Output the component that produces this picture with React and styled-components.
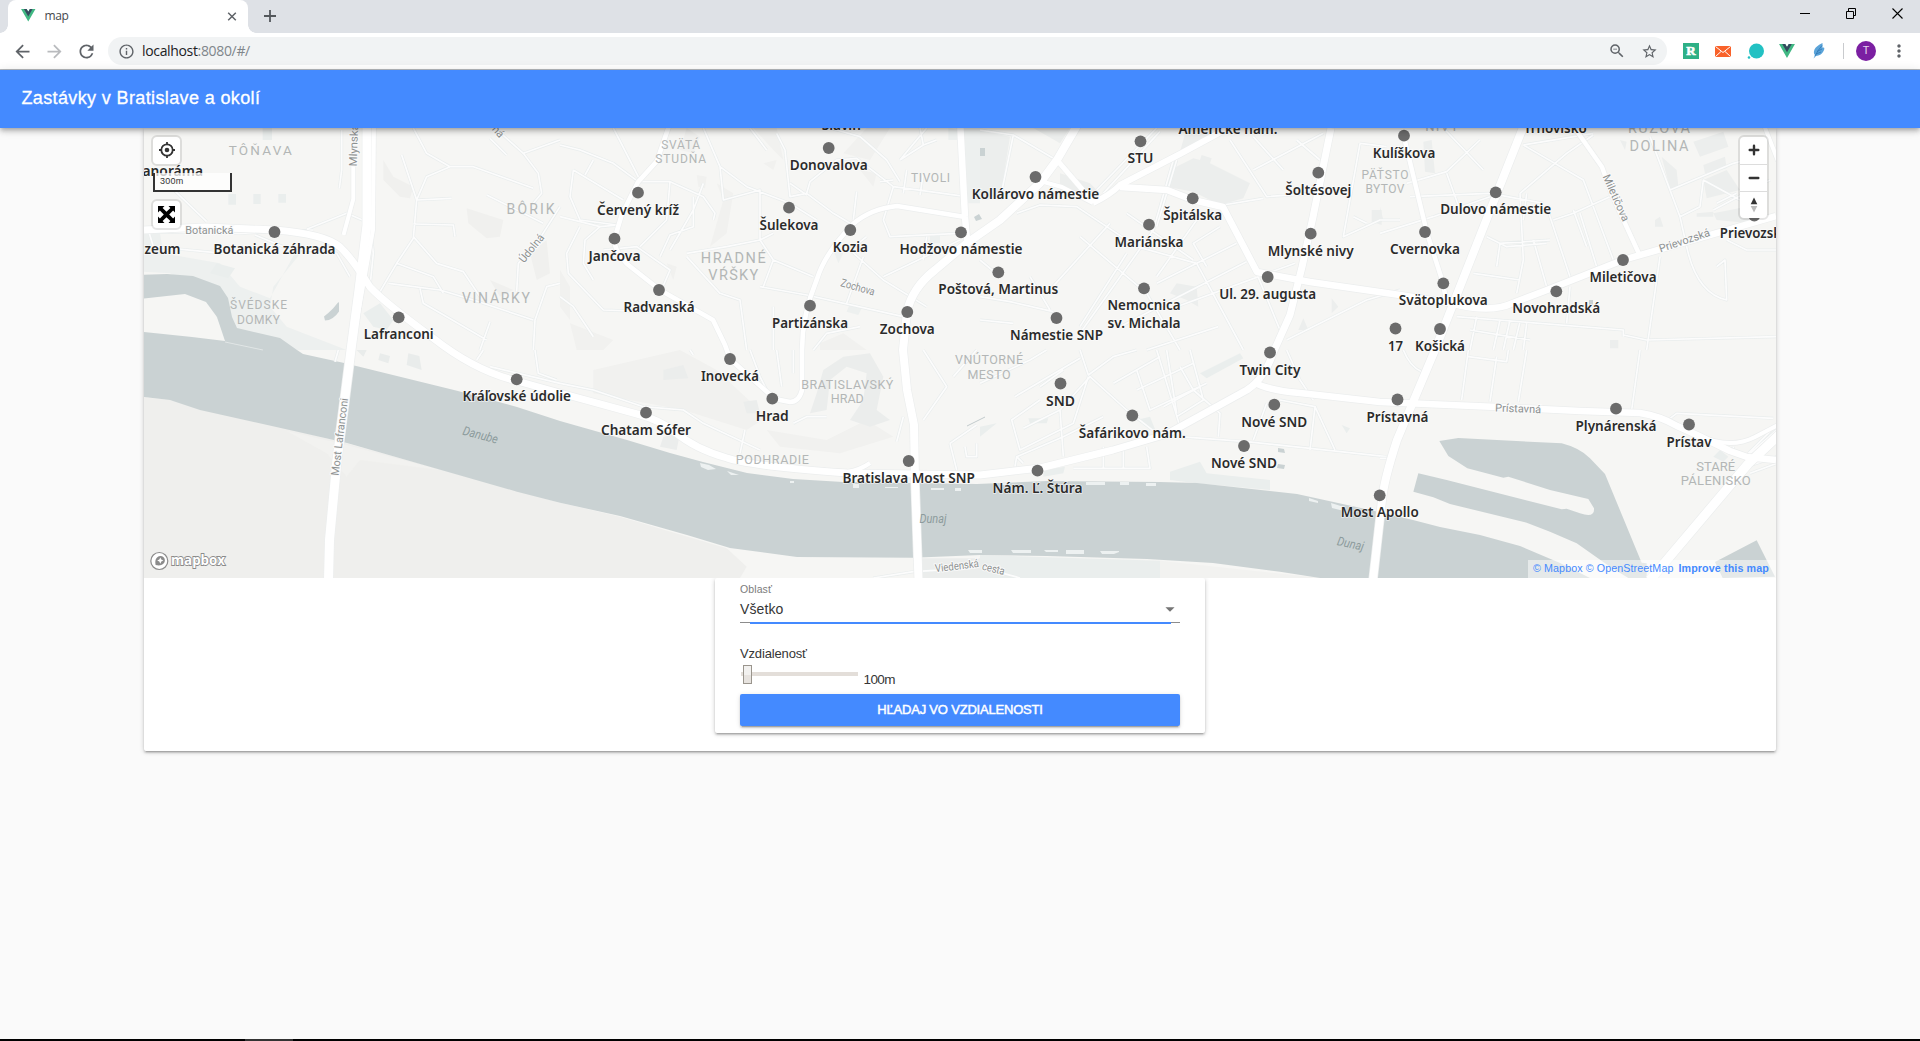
import React from 'react';
import styled, { createGlobalStyle } from 'styled-components';
import { MdArrowBack, MdArrowForward, MdRefresh, MdInfoOutline, MdStarBorder, MdZoomOut, MdMoreVert, MdArrowDropDown } from 'react-icons/md';

const GlobalStyle = createGlobalStyle`
  * { box-sizing: border-box; }
  body { margin: 0; background: #fafafa; font-family: "Liberation Sans", Arial, sans-serif; }
`;

const Screen = styled.div`
  width: 1920px;
  height: 1041px;
  display: flex;
  flex-direction: column;
  overflow: hidden;
  background: #fafafa;
`;

/* ---------- browser chrome ---------- */

const TabStrip = styled.div`
  height: 33px;
  flex: none;
  display: flex;
  background: #dee1e6;
  padding-left: 8px;
  font-family: "Open Sans", "Noto Sans", sans-serif;
`;

const Tab = styled.div`
  position: relative;
  width: 240px;
  height: 33px;
  display: flex;
  align-items: center;
  padding: 0 8px 2px 13px;
  background: #fff;
  border-radius: 8px 8px 0 0;
  &::before, &::after {
    content: "";
    position: absolute;
    bottom: 0;
    width: 8px;
    height: 8px;
  }
  &::before { left: -8px; background: radial-gradient(circle at 0 0, #dee1e6 7.5px, #fff 8px); }
  &::after { right: -8px; background: radial-gradient(circle at 100% 0, #dee1e6 7.5px, #fff 8px); }
`;

const TabTitle = styled.span`
  flex: 1;
  margin-left: 9px;
  font-size: 12px;
  line-height: 16px;
  letter-spacing: -0.4px;
  color: #45494d;
`;

const NewTab = styled.div`
  width: 28px;
  height: 32px;
  margin-left: 8px;
  display: grid;
  place-items: center;
`;

const WindowButtons = styled.div`
  margin-left: auto;
  height: 26px;
  display: flex;
`;

const WindowButton = styled.div`
  width: 46px;
  display: grid;
  place-items: center;
`;

const Toolbar = styled.div`
  height: 37px;
  flex: none;
  display: flex;
  align-items: center;
  padding: 0 3px 0 6px;
  background: #fff;
  border-bottom: 1px solid #b5b8bc;
  font-family: "Open Sans", "Noto Sans", sans-serif;
`;

const Slot = styled.div`
  width: 32px;
  height: 32px;
  flex: none;
  display: grid;
  place-items: center;
  color: ${p => p.$color || '#5f6368'};
`;

const AddressBar = styled.div`
  width: 1559px;
  flex: none;
  height: 28px;
  margin: 0 8px 0 6px;
  display: flex;
  align-items: center;
  padding: 0 2px;
  border-radius: 14px;
  background: #f1f3f4;
`;

const Address = styled.span`
  flex: 1;
  font-size: 14px;
  letter-spacing: -0.34px;
  line-height: 20px;
  color: #202124;
  span { color: #80868b; }
`;

const Separator = styled.div`
  width: 1px;
  height: 16px;
  margin: 0 10px 0 8px;
  background: #c9cbce;
`;

const Avatar = styled.div`
  width: 20px;
  height: 20px;
  flex: none;
  margin: 0 7px 0 2px;
  border-radius: 50%;
  background: #7b1fa2;
  color: #e6d3ee;
  font: 11px/20px Roboto, sans-serif;
  text-align: center;
`;

/* ---------- application ---------- */

const AppBar = styled.header`
  position: relative;
  z-index: 2;
  height: 58px;
  flex: none;
  display: flex;
  align-items: center;
  padding: 0 0 2px 21.5px;
  background: #448aff;
  color: #fff;
  box-shadow: 0 2px 4px -1px rgba(0,0,0,.2), 0 4px 5px rgba(0,0,0,.14), 0 1px 10px rgba(0,0,0,.12);
`;

const Title = styled.h1`
  margin: 0;
  font-size: 18px;
  font-weight: 400;
  letter-spacing: 0.37px;
  line-height: 24px;
  -webkit-text-stroke: 0.3px #fff;
`;

const Content = styled.main`
  flex: 1;
  display: flex;
  flex-direction: column;
  align-items: center;
`;

const elevation = '0 1px 5px rgba(0,0,0,.2), 0 2px 2px rgba(0,0,0,.14), 0 3px 1px -2px rgba(0,0,0,.12)';

const MapCard = styled.section`
  width: 1632px;
  height: 623px;
  display: flex;
  flex-direction: column;
  align-items: center;
  background: #fff;
  border-radius: 2px;
  box-shadow: ${elevation};
`;

const MapView = styled.div`
  position: relative;
  width: 1632px;
  height: 450px;
  overflow: hidden;
  background: #f6f6f4;
  > svg { display: block; }
`;

const ControlGroup = styled.div`
  position: absolute;
  top: ${p => p.$top}px;
  ${p => p.$right ? 'right: 9px;' : 'left: 9px;'}
  width: 27px;
  border-radius: 4px;
  overflow: hidden;
  background: #fff;
  outline: 2px solid rgba(0,0,0,.1);
`;

const ControlButton = styled.div`
  height: 27px;
  display: grid;
  place-items: center;
  & + & { border-top: 1px solid #ddd; }
`;

const ScaleBar = styled.div`
  position: absolute;
  left: 9px;
  top: 45px;
  width: 79px;
  height: 19px;
  padding: 2px 5px;
  border: 2px solid #333;
  border-top: 0;
  background: rgba(255,255,255,.75);
  font-size: 9px;
  line-height: 12px;
  letter-spacing: .25px;
  color: #333;
`;

const Attribution = styled.div`
  position: absolute;
  right: 0;
  bottom: 0;
  width: 248px;
  height: 18px;
  display: flex;
  gap: 3px;
  padding-left: 5px;
  background: rgba(255,255,255,.5);
  color: #448aff;
  font-size: 10.7px;
  line-height: 17px;
  letter-spacing: .1px;
  white-space: nowrap;
  b { margin-left: 2px; letter-spacing: .12px; }
`;

const SearchCard = styled.form`
  width: 490px;
  height: 155px;
  display: flex;
  flex-direction: column;
  padding: 4px 25px 0;
  background: #fff;
  border-radius: 2px;
  box-shadow: ${elevation};
  color: #363636;
  clip-path: inset(0 -10px -10px -10px);
`;

const FieldLabel = styled.label`
  font-size: 10.5px;
  line-height: 15px;
  letter-spacing: .1px;
  color: #7b7b7b;
`;

const Select = styled.div`
  height: 26px;
  display: flex;
  align-items: center;
  justify-content: space-between;
  padding-bottom: 1px;
  font-size: 14px;
  letter-spacing: .1px;
  border-bottom: 1px solid #8c8c8c;
  svg { margin-right: -1px; color: #757575; }
`;

const FocusLine = styled.div`
  height: 2px;
  margin: -1px 9px 0 10px;
  background: #448aff;
`;

const RangeLabel = styled.div`
  margin-top: 21px;
  font-size: 13px;
  line-height: 18px;
  letter-spacing: -0.15px;
`;

const RangeRow = styled.div`
  height: 31px;
  display: flex;
  padding-left: 1px;
`;

const Track = styled.div`
  width: 117px;
  height: 4px;
  margin-top: 9px;
  background: #e3ded9;
`;

const Thumb = styled.div`
  width: 9px;
  height: 19px;
  margin: -7px 0 0 2px;
  border: 1px solid #9a958d;
  background: linear-gradient(#f2f1ef 50%, #e7e3df 50%);
`;

const RangeValue = styled.span`
  margin: 8px 0 0 5.5px;
  font-size: 13.5px;
  line-height: 18px;
  letter-spacing: -0.6px;
`;

const SearchButton = styled.div`
  height: 32px;
  border-radius: 2px;
  background: #448aff;
  box-shadow: 0 3px 1px -2px rgba(0,0,0,.2), 0 2px 2px rgba(0,0,0,.14), 0 1px 5px rgba(0,0,0,.12);
  color: #fff;
  font-size: 13px;
  line-height: 31px;
  letter-spacing: -0.2px;
  text-align: center;
  -webkit-text-stroke: 0.45px #fff;
`;

const TaskbarEdge = styled.div`
  height: 2px;
  flex: none;
  padding-left: 245px;
  background: #000;
  &::before { content: ""; display: block; width: 48px; height: 2px; background: #333; }
`;

/* ---------- map data ---------- */

const stops = [
  ['Botanická záhrada', 274.5, 232, 122], ['Lafranconi', 398.7, 317.3, 70], ['Donovalova', 828.7, 148, 78],
  ['Červený kríž', 638, 192.7, 82], ['Jančova', 614.5, 238.7, 52], ['Radvanská', 659, 290, 71],
  ['Šulekova', 789, 207.7, 59], ['Kozia', 850.3, 230, 35], ['Hodžovo námestie', 961, 232.3, 123],
  ['Partizánska', 810, 305.7, 76], ['Zochova', 907.3, 312, 55], ['STU', 1140.5, 141.3, 26],
  ['Kollárovo námestie', 1035.5, 177, 127.5], ['Špitálska', 1192.7, 198.3, 59], ['Mariánska', 1149, 224.7, 69],
  ['Poštová, Martinus', 998.3, 272.3, 120], ['Námestie SNP', 1056.5, 318, 93], ['Nemocnica|sv. Michala', 1144, 288.3, 73],
  ['Ul. 29. augusta', 1267.7, 277, 97], ['Šoltésovej', 1318.3, 172.7, 66], ['Mlynské nivy', 1310.7, 233.7, 86],
  ['Twin City', 1270, 352.5, 61], ['Kulíškova', 1404, 135.7, 62.5], ['Dulovo námestie', 1495.7, 192.3, 111],
  ['Cvernovka', 1425, 232, 70], ['Svätoplukova', 1443.3, 283.3, 89], ['Novohradská', 1556.3, 291.3, 88],
  ['Miletičova', 1623, 260, 67], ['Prievozská', 1754.3, 215.5, 69], ['17', 1395.5, 328.5, 15],
  ['Košická', 1440, 329, 50], ['Kráľovské údolie', 516.7, 379.3, 108.5], ['Inovecká', 730, 359, 58],
  ['Hrad', 772.3, 398.7, 33], ['Chatam Sófer', 646, 412.7, 90], ['Bratislava Most SNP', 908.7, 461, 132.5],
  ['SND', 1060.5, 383.5, 29], ['Šafárikovo nám.', 1132.3, 415.5, 107], ['Nové SND', 1274.3, 404.7, 66],
  ['Nové SND', 1244, 446, 66], ['Nám. Ľ. Štúra', 1037.5, 470.7, 90], ['Most Apollo', 1379.7, 495.3, 78],
  ['Prístavná', 1397.5, 399.5, 62], ['Plynárenská', 1616, 408.7, 81], ['Prístav', 1689, 424.5, 45],
];

const edgeStops = [
  ['Slavín', 841.3, 130, 39], ['Americké nám.', 1228, 134.3, 99], ['Trhovisko', 1555.3, 133, 63],
  ['Panoráma', 168.5, 176.4, 69], ['Múzeum', 152, 253.8, 57],
];

const districts = [
  ['TÔŇAVA', 260.3, 155.3, 63, 13.5], ['ŠVÉDSKE', 258.5, 309.3, 57, 12], ['DOMKY', 258.5, 323.5, 43, 12],
  ['BÔRIK', 530.6, 214.3, 48, 14], ['VINÁRKY', 496, 303.4, 68, 14], ['SVÄTÁ', 680.7, 149, 39, 12],
  ['STUDŇA', 680.7, 163, 51, 12], ['HRADNÉ', 733.3, 263.3, 65, 14.5], ['VŔŠKY', 733.3, 280.3, 50, 14.5],
  ['TIVOLI', 930.5, 182, 39, 12], ['PÄŤSTO', 1385, 179.3, 47, 12], ['BYTOV', 1385, 193.3, 39, 12],
  ['NIVY', 1441.7, 131, 33, 13], ['RUŽOVA', 1659, 133.3, 62, 14.5], ['DOLINA', 1659, 151, 59, 14.5],
  ['VNÚTORNÉ', 989, 363.7, 68, 12.5], ['MESTO', 989, 378.5, 43, 12.5], ['BRATISLAVSKÝ', 847.3, 388.7, 92, 12.5],
  ['HRAD', 847.3, 403.3, 33, 12.5], ['PODHRADIE', 772.3, 463.8, 73, 12.5], ['STARÉ', 1715.7, 471, 39, 13],
  ['PÁLENISKO', 1715.7, 485.3, 70, 13],
];

/* name, x, y, width, angle */
const streets = [
  ['Botanická', 185.3, 234.3, 48, 0], ['Mlynská dolina', 356.7, 166.5, 76, -88], ['Údolná', 524, 263.5, 33, -51],
  ['ná', 491.5, 129.5, 12, 48], ['Zochova', 840, 286, 35, 16], ['Miletičova', 1602.5, 176.5, 50, 66],
  ['Prievozská', 1660.5, 252.5, 53, -18.5], ['Prístavná', 1495, 411.5, 46, 2], ['Most Lafranconi', 338.5, 476, 78, -83],
  ['Viedenská', 935.5, 572.3, 44, -7], ['cesta', 981.5, 569.5, 23, 14],
];

const waterNames = [['Danube', 462, 434.5, 36, 15], ['Dunaj', 919.5, 522.5, 27, 0], ['Dunaj', 1336.5, 545, 27, 12]];

const mainRoads = [
  ['M144 230L205 227L275 230Q325 234 340 247Q352 258 370 287Q385 303 433 338Q475 371 517 381L560 393L637 414Q660 420 675 432Q695 449 727 458Q750 466 847 473L980 475L1040 468L1113 450L1167 434L1247 390Q1265 378 1273 353L1290 315L1302 267L1313 217L1331 128', 7],
  ['M367 120L367 225L359 290L351 350L337 460L329.5 540L328.5 580', 9],
  ['M374 120L373 230L357 320', 4], ['M353.3 165L353.3 199L343.5 235', 4],
  ['M1253 382Q1270 391 1300 393L1380 402L1497 407L1580 411L1640 413Q1660 416 1677 426L1697 435L1730 451L1747 457L1776 460', 6.5],
  ['M1697 435Q1730 450 1755 437L1780 424', 4],
  ['M1526 120L1497 193L1435 350L1397 440Q1384 480 1382 500L1373 580', 8],
  ['M1078 124L1057 160L1040 183L1000 220L967 243L935 270Q912 288 907 312L903 350L907 390L914 425L915 480L918.5 580', 8],
  ['M1057 160L1093 202', 5], ['M1040 181L1062 187L1093 203', 4], ['M1093 203Q1110 195 1120 185L1180 154L1228 128', 6],
  ['M1120 187L1167 190L1193 200L1223 207L1257 272L1310 282L1400 295L1450 303Q1490 314 1513 303L1547 290L1623 260L1776 216', 6.5],
  ['M960 120L965 217L967 240', 6.5],
  ['M965 217L897 206Q870 209 853 224Q825 253 817 279Q802 315 802 350L802 390Q799 402 790 402L775 399L730 359L725 345L713 320L660 290L627 264Q612 248 615 237L622 214L638 182L657 161L671 120', 4.6],
  ['M1404 137L1427 233L1443 283L1446 300', 4.5], ['M1576 130L1602 167L1612 195L1640 256', 4.5],
  ['M1650 580L1748 464L1780 434', 9], ['M1762 120L1778 161', 4], ['M767 467L847 472Q860 470 870 463', 4],
];

/* minor streets, one origin per block of the plan, in thirds of a pixel */
const blocks = [
  [140, 120, 'M605 30V150L598 205M60 170L200 305M25 330L40 380L250 400M345 345L430 380L500 390L590 400L630 470M500 328L620 280L690 310L700 400L690 500M695 230L700 330M820 24L860 100L930 140L1000 140L1180 205M1050 55L1100 105M1065 24L1150 100L1260 60M1150 100L1195 160L1205 220L1180 250M1040 225L1210 310M930 140L860 170L830 240L785 105M830 240L935 235M830 240L820 355L770 430L720 515M820 312L940 315L945 350M820 350L890 430L970 455L1020 530M770 430L880 470L910 520M745 490L900 510L1000 540L1180 600M840 505L850 550L920 590L1040 660M1050 605L1020 690M1260 260L1190 370L1135 430L1130 515M1180 690L1185 600L1220 500L1260 490M12 335L300 340L520 330'],
  [560, 120, 'M0 75L60 90L160 130L235 185L330 185L430 230L465 280L460 300M100 120L75 165M40 150L190 240M40 150L30 230L60 300L170 315M0 290L120 320L175 315M60 320L20 400L25 460L130 570L270 575M120 320L75 360L70 430L100 480M130 390L230 380L330 450L300 520M330 185L320 300L240 380M400 230L400 320L330 345L300 410M160 24L240 180M430 24L480 140L560 200L690 250L770 300M430 190L400 270L330 390M480 140L490 240L600 210L600 360L640 420L610 500M380 400L500 380L600 360L640 340M380 410L480 520L540 540L560 690M600 500L740 525L1030 590M640 420L760 470M570 24L620 90M650 40L675 90L690 230L740 220L750 185L830 120L890 115L1000 200L1220 230M810 24L900 50L980 120L1020 185M740 220L820 280L870 310M690 190L740 225M1020 120L1090 75L1080 24M1100 24L1020 120M1130 60L1090 75M1040 150L1030 220M1090 160L1080 225M1000 200L970 300L990 350L1200 340M920 350L870 390L970 480L1100 560M910 410L860 550M970 470L1200 360M1100 350L1090 420M880 300L890 215M1000 180L960 185M0 530L40 560L100 650M640 560L640 690M760 690L800 640L900 620'],
  [980, 120, 'M0 30L100 45L220 115M100 45L60 240M110 280L180 255L290 260L470 380L650 430L790 690M350 210L530 24M370 220L540 34M580 120L520 330L300 640M590 120L530 320M300 350L500 520L600 690M390 310L200 520M440 280L640 420M440 400L300 620M650 300L530 470M720 320L640 370L680 440M770 370L530 490M800 425L420 620M830 460L900 630M945 430L590 560M750 60L860 230L1000 220M820 50L910 150M820 150L1030 40M950 60L1020 120M730 255L850 235M500 690L715 620M0 420L60 470M150 470L210 570M0 530L90 545L220 575M1140 70L1090 350L1200 300L1260 300M1140 70L1220 80M1120 290L1160 310M920 660L1160 540L1260 510M0 600L100 610'],
  [1380, 120, 'M80 190L200 155L300 60M190 24L310 150M200 160L240 270M90 230L330 220L490 250M430 75L610 180L700 420M430 75L640 40M420 220L560 100L640 45M420 220L430 420L410 520M440 220L430 300M500 260L570 470M460 360L500 500M360 370L510 360M360 370L350 440M320 350L380 380L500 370M580 270L620 380M600 280L650 440M690 230L580 280L520 300M280 460L420 480M0 340L160 290L330 230M810 50L900 290L920 380Q950 520 1040 540L1035 420L1010 440M870 210L1060 130L1080 125M900 290L960 260L970 180L1080 240M1010 250L1070 220M1000 270L1170 180M840 410L800 690M570 500L560 610M230 590L730 630V650M270 630L450 660M290 590L270 690M360 600L340 690M390 600L370 690M420 605L400 690M440 610L430 690M730 645L800 660L1190 650M1040 360L1100 390L1190 390'],
  [140, 350, 'M1010 30L1030 0M1185 0L1195 70L1250 90M1050 50L1260 100M595 0L585 35'],
  [560, 350, 'M0 100L100 120L250 170L370 180L430 220L600 300M555 240L540 310M390 0L400 15M570 0L600 80L620 120M650 0L665 110M700 0V70M1090 0L1160 110L1090 210M1170 280L1250 225M1170 280L1190 360M1215 290L1220 320L1250 320V280M1250 0L1180 80M1030 200L1010 275M800 200L740 200L700 220M940 684L1060 665L1230 655'],
  [980, 350, 'M0 100L150 30L200 0M105 140L300 25M180 110L250 60M300 0L325 75L400 20L470 0M325 80L280 220L120 300L95 210L180 150M130 235L240 180L330 80L440 180L530 250M240 180L250 320M110 320L250 260L370 200M530 0L600 230M630 0L670 150L590 200M600 50L640 120L720 190L715 260M400 100L540 20M470 60L510 180L680 100M470 120L640 40M550 170L660 110M370 290V355M430 280V355M500 290L510 355L280 355M105 350L110 320L130 340M600 260L800 275L990 295L1220 320M990 300L1005 170L900 150M1005 170L1065 300M860 160L820 270M920 0L960 90L1000 150M560 0L590 190M70 670L120 684'],
  [1380, 350, 'M265 0L245 150M350 20L330 155M440 0L415 155M265 20L380 35L385 0M780 0L755 180M870 205L890 190L1180 205M70 0Q90 50 125 65M0 325L20 325M1100 320L1190 240M1100 350L1190 320M1110 370L1190 340M1105 310L1190 225M1060 290V310'],
];

const shades = [
  [140, 120, '#edf0ef', 'M490 390L400 500L390 560L440 620L620 690H290L250 640L200 520L90 460L12 455V340H60L70 400L240 430L300 500L390 535L470 390Z'],
  [140, 120, '#eaeeed', 'M230 430L285 445L265 475L210 460ZM265 222H288V254H265ZM340 222H362V252H340ZM415 222H438V248H415ZM368 24H396V60H368ZM670 580L720 550L760 600L740 630L700 620Z'],
  [140, 120, '#f0f0ee', 'M730 120L760 170L820 200L810 235L780 230L730 180ZM980 265L1090 300L1080 350L1040 355L985 310ZM1170 400L1220 360L1230 460L1190 480ZM1050 480L1120 510L1080 530Z'],
  [560, 120, '#f1f1ef', 'M470 190L520 220L500 340L450 380L490 240ZM380 24L420 50L400 100L360 90ZM580 24H650L670 120L640 90ZM920 24H990L930 120L850 100ZM610 130L650 120L640 150ZM410 165L440 170L435 205L415 200ZM900 150L950 160L940 200ZM320 430L350 440L340 480ZM0 450L30 500V600L0 560ZM30 610L160 660L130 690H50ZM780 670L850 640L920 690H780Z'],
  [560, 120, '#edf0ef', 'M1210 24H1260V250H1220ZM870 550L905 565L895 585L860 575ZM820 390L850 400L835 430ZM1110 340H1140V370H1110ZM1165 24L1195 30V60H1165Z'],
  [980, 120, '#eceeed', 'M0 30L90 50L60 235L0 240ZM160 24H270L240 70ZM240 160L330 190L360 220L240 210ZM640 115L660 120L665 105L695 115L690 130L810 190L790 235L720 255L640 215L560 200L570 150ZM620 24L700 40L600 95ZM590 490L650 500L655 560L620 540L570 520ZM1175 270H1205V315L1175 305ZM970 595L985 630L955 630ZM1055 535L1075 560L1055 580Z'],
  [1380, 120, '#eceeed', 'M130 65L155 60L165 160L135 155ZM940 65L1030 35L1045 80L960 110ZM970 135L1035 110L1040 145L975 160ZM970 180L1040 150L1080 210L980 235ZM845 110L890 150L895 200L870 205ZM1000 280L1100 260L1110 310L1010 300ZM950 280L1000 275V290H950ZM825 300L840 290L850 320H825ZM690 660H715V685H690ZM720 60L740 65L735 90ZM0 260L10 300L0 310Z'],
  [140, 350, '#efefed', 'M12 142L90 150L620 280L1260 458V684H12Z'],
  [140, 350, '#f2f2f0', 'M440 243L620 285L900 360L660 330L620 380L560 310Z'],
  [140, 350, '#e9eceb', 'M720 10L750 18L745 40L715 30ZM805 10L838 18L845 60L800 45ZM650 0H680L670 20Z'],
  [560, 350, '#efefed', 'M0 458L180 500L500 595L560 650L540 684H0Z'],
  [560, 350, '#f1f1ef', 'M100 60L360 0L470 60L620 200L560 240L370 180L100 130ZM620 240L800 270L920 210L1000 260L840 310L660 290Z'],
  [560, 350, '#ebedec', 'M310 60L370 45L385 85L310 90ZM310 260L360 250L350 300L300 290ZM550 155L590 150L600 190L560 190ZM750 190L770 130L790 60L850 20L930 10L970 80L950 180L990 210L930 230L870 210L910 150L920 70L860 50L810 90L800 180ZM1080 625H1260V684H1080Z'],
  [980, 350, '#eaeeed', 'M0 615L540 632V684H0ZM660 70L780 10L790 25L680 85ZM570 365L660 335L680 370L870 390V420L650 400L570 390ZM190 360L255 350L250 370L190 380ZM145 205L205 205L200 220H150ZM1085 225L1110 235L1100 250ZM470 210L510 200L530 250ZM0 230L50 220L0 260Z'],
  [980, 350, '#f2f2f0', 'M540 632L1020 684H540Z'],
  [1380, 350, '#eaeeed', 'M1000 320L1020 300L1045 320L1030 335Z'],
];

const boats = 'M700 463l9 2 7 4-8 1-7-3zM727 471l12 4-8 0zM885 487h13v1h-13zM931 488h13v2h-13zM853 484h6v4h-6zM790 481h4v2h-4zM955 488h6v3h-6zM1000 483h10v2h-10zM1086 482h19v3h-19zM1120 482h9v3h-9zM1146 483h10v3h-10zM1309 498l9 3v2l-9-2zM1331 503l13 4v4l-12-3zM1011 550h20v3h-18zM1044 550h14v2h-12zM1066 550h18v4h-18zM1100 551h19v1l-5 2h-12zM968 550h14v3h-12z';

const Road = styled.path`
  fill: none;
  stroke-linejoin: round;
  stroke-linecap: butt;
`;

const StopName = styled.text`
  font: 600 13.7px "Noto Sans", "Open Sans", sans-serif;
  fill: #2b2b2b;
  text-anchor: middle;
  stroke: rgba(255,255,255,.65);
  stroke-width: 1.4px;
  paint-order: stroke;
`;

const DistrictName = styled.text`
  font-family: Roboto, sans-serif;
  fill: #b3b6b6;
  text-anchor: middle;
`;

const StreetName = styled.text`
  font: ${p => (p.$water ? 'italic 12.5px' : '11px')} Roboto, sans-serif;
  fill: ${p => (p.$water ? '#8c9b9c' : '#8d9191')};
  stroke: ${p => (p.$water ? 'none' : '#fafafa')};
  stroke-width: 2px;
  paint-order: stroke;
`;

const Brand = styled.text`
  font: 700 15px "Open Sans", sans-serif;
  fill: #fff;
  stroke: #8b8b8b;
  stroke-width: 1.8px;
  paint-order: stroke;
`;

function CityPlan() {
  return (
    <svg width="1632" height="450" viewBox="144 128 1632 450">
      {shades.map(([x, y, fill, d], i) => (
        <path key={i} d={d} fill={fill} transform={`translate(${x} ${y}) scale(.33333)`} />
      ))}
      <g fill="#cad2d3">
        <path d="M144 274.7L167 274L193 276L220 286L228 298L232 317L237 328L280 338L297 350L303 354L343 362.7L457 390.7L517 407L560 421L627 440L670 453L703 462L747 473L793 479L843 482L977 484L1047 481L1160 482L1197 483L1270 491L1297 494L1370 510L1413 520L1440 527L1480 535L1520 546L1560 563L1590 578L1320 578L1280 571.7L1213 563L1147 559L1047 556L980 555L913 557.7L797 557L730 548L687 535L620 516L560 502.7L517 491.7L347 443L293 430.7L200 410L170 400L144 397V332L192 337L225 341L217 317L206 302L185 294L144 298.5Z" />
        <path d="M339 303q0-1 -1-0.5l-5 6q-5 5-9 8l1 4q8 0 14-9z" />
        <path transform="translate(1380 350) scale(.33333)" d="M178 273L235 264L545 280Q600 294 630 325L675 372L785 638L800 640V684H745L690 650L590 580L510 545L440 518L210 462L160 442L100 425L115 370L200 390L545 478L560 476L600 490Q645 505 642 475L625 447L510 420L385 380L370 383L262 355L205 318ZM1005 636L1130 571L1185 680L1028 684Z" />
        <path d="M1278 448l6 1 1 4-7-1zM1278 464l7 1-1 4-7-1zM980 148h5v8h-5zM974 217l5-3 3 5-6 2zM1589 300h4v5h-4z" />
      </g>
      <path d="M967 426l18-9" fill="none" stroke="#b4bfc1" strokeWidth=".8" />
      <path d="M225 342L263 350" fill="none" stroke="#e3e8e8" strokeWidth=".9" />
      <path d={boats} fill="#edf1f1" />
      {blocks.map(([x, y, d], i) => (
        <g key={i} transform={`translate(${x} ${y}) scale(.33333)`}>
          <Road d={d} stroke="#e9eded" strokeWidth="9" />
          <Road d={d} stroke="#fcfcfc" strokeWidth="5" />
        </g>
      ))}
      {mainRoads.map(([d, w], i) => <Road key={i} d={d} stroke="#eceeee" strokeWidth={w + 1.4} />)}
      {mainRoads.map(([d, w], i) => <Road key={i} d={d} stroke="#fff" strokeWidth={w} />)}
      {districts.map(([name, x, y, w, size]) => (
        <DistrictName key={name} x={x} y={y} textLength={w} fontSize={size}>{name}</DistrictName>
      ))}
      {streets.map(([name, x, y, w, a]) => (
        <StreetName key={name} textLength={w} lengthAdjust="spacingAndGlyphs" transform={`translate(${x} ${y}) rotate(${a})`}>{name}</StreetName>
      ))}
      {waterNames.map(([name, x, y, w, a]) => (
        <StreetName $water key={x} textLength={w} lengthAdjust="spacingAndGlyphs" transform={`translate(${x} ${y}) rotate(${a})`}>{name}</StreetName>
      ))}
      {edgeStops.map(([name, x, y, w]) => (
        <StopName key={name} x={x} y={y} textLength={w} lengthAdjust="spacingAndGlyphs">{name}</StopName>
      ))}
      {stops.map(([name, x, y, w]) => (
        <g key={x}>
          <circle cx={x} cy={y} r="5.9" fill="#6b6b6b" />
          {name.split('|').map((line, i) => (
            <StopName key={line} x={x} y={y + 22.1 + i * 17.4} textLength={w} lengthAdjust="spacingAndGlyphs">{line}</StopName>
          ))}
        </g>
      ))}
      <circle cx="159.3" cy="561" r="8.5" fill="#fff" stroke="#8b8b8b" strokeWidth="1.2" />
      <path d="M155.6 565.1q-1-5 1.2-7.3a4.5 4.5 0 1 1 6.3 6.3q-2.500 2.2-7.5 1z" fill="#8b8b8b" />
      <path d="M160.3 557.5l1 2.100 2.100 1-2.100 1-1 2.100-1-2.100-2.100-1 2.100-1z" fill="#fff" />
      <Brand x="171" y="565" textLength="54" lengthAdjust="spacingAndGlyphs">mapbox</Brand>
    </svg>
  );
}

const VueLogo = ({ size }) => (
  <svg width={size} height={size * 0.87} viewBox="0 0 24 21">
    <path d="M0 0h9.300L12 4.700 14.700 0H24L12 21z" fill="#41b883" />
    <path d="M4.800 0h4.500L12 4.700 14.700 0h4.500L12 12.500z" fill="#35495e" />
  </svg>
);

const ReaderIcon = styled.div`
  width: 16px;
  height: 16px;
  background: #2eb086;
  color: #fff;
  font: 700 13px/16px "Liberation Serif", serif;
  text-align: center;
  -webkit-text-stroke: 0.6px #fff;
`;

export default function App() {
  return (
    <Screen>
      <GlobalStyle />
      <TabStrip>
        <Tab>
          <VueLogo size={14.5} />
          <TabTitle>map</TabTitle>
          <svg width="16" height="16" viewBox="0 0 16 16" stroke="#5f6368" strokeWidth="1.5"><path d="M4.200 4.700l7.600 7.600m0-7.600l-7.600 7.600" /></svg>
        </Tab>
        <NewTab>
          <svg width="14" height="14" stroke="#53575b" strokeWidth="1.8"><path d="M7 1v12M1 7h12" /></svg>
        </NewTab>
        <WindowButtons>
          <WindowButton><svg width="10" height="10"><path d="M0 5h10v1H0z" /></svg></WindowButton>
          <WindowButton><svg width="11" height="11" fill="none" stroke="#000"><path d="M.5 3.500h7v7h-7zM2.500 3V.5h7v7H8" /></svg></WindowButton>
          <WindowButton><svg width="11" height="11" stroke="#000" strokeWidth="1.100"><path d="M.5.5l10 10m0-10l-10 10" /></svg></WindowButton>
        </WindowButtons>
      </TabStrip>
      <Toolbar>
        <Slot><MdArrowBack size={21} /></Slot>
        <Slot $color="#b9bbbe"><MdArrowForward size={21} /></Slot>
        <Slot><MdRefresh size={21} /></Slot>
        <AddressBar>
          <Slot><MdInfoOutline size={17} /></Slot>
          <Address>localhost<span>:8080/#/</span></Address>
          <Slot><MdZoomOut size={18} /></Slot>
          <Slot><MdStarBorder size={17} /></Slot>
        </AddressBar>
        <Slot><ReaderIcon>R</ReaderIcon></Slot>
        <Slot>
          <svg width="16" height="11" viewBox="0 0 16 11"><rect width="16" height="11" rx="1" fill="#f9622a" /><path d="M.5.5L8 6.500 15.500.5M.5 10.500l5.500-5m9.500 5L10 5.500" fill="none" stroke="#fff" /></svg>
        </Slot>
        <Slot>
          <svg width="17" height="17"><circle cx="9.500" cy="8" r="7.500" fill="#22c1c3" /><circle cx="2" cy="14.500" r="1.300" fill="#22c1c3" /></svg>
        </Slot>
        <Slot><VueLogo size={16} /></Slot>
        <Slot>
          <svg width="12" height="16" viewBox="0 0 12 16"><path d="M9.500 0Q3 3 1.500 6.500T2 12L.5 15.500 3 13Q8 12.500 10 9t1-4.500L9.500 4.800z" fill="#5ba4d9" /><path d="M2 13Q5 7 9 2.500M3 11l5-2M4 8.500L9 6" stroke="#2e77b5" strokeWidth=".8" fill="none" /></svg>
        </Slot>
        <Separator />
        <Avatar>T</Avatar>
        <Slot><MdMoreVert size={20} /></Slot>
      </Toolbar>
      <AppBar><Title>Zastávky v Bratislave a okolí</Title></AppBar>
      <Content>
        <MapCard>
          <MapView>
            <CityPlan />
            <ControlGroup $top={8.5}>
              <ControlButton>
                <svg width="16" height="16" viewBox="0 0 16 16" fill="none" stroke="#333" strokeWidth="1.800"><circle cx="8" cy="8" r="5.700" /><circle cx="8" cy="8" r="2.300" fill="#333" stroke="none" /><path d="M8 0v3M8 13v3M0 8h3M13 8h3" /></svg>
              </ControlButton>
            </ControlGroup>
            <ScaleBar>300m</ScaleBar>
            <ControlGroup $top={72.5}>
              <ControlButton>
                <svg width="17" height="17" viewBox="0 0 17 17"><path d="M0 0h6.500L4.600 1.900 8.500 5.800 12.400 1.900 10.500 0H17v6.500l-1.900-1.900-3.900 3.900 3.900 3.900 1.900-1.900V17h-6.500l1.900-1.900-3.900-3.900-3.900 3.900L6.500 17H0v-6.500l1.900 1.900 3.900-3.900L1.900 4.600 0 6.500z" /></svg>
              </ControlButton>
            </ControlGroup>
            <ControlGroup $right $top={8.5}>
              <ControlButton><svg width="12" height="12" stroke="#333" strokeWidth="2.400" strokeLinecap="round"><path d="M6 1.700v8.600M1.700 6h8.600" /></svg></ControlButton>
              <ControlButton><svg width="12" height="12" stroke="#333" strokeWidth="2.400" strokeLinecap="round"><path d="M1.700 6h8.600" /></svg></ControlButton>
              <ControlButton><svg width="8" height="16"><path d="M4 .5L7.300 7.300H.7z" fill="#333" /><path d="M4 15.500L7.300 9H.7z" fill="#bbb" /></svg></ControlButton>
            </ControlGroup>
            <Attribution><span>© Mapbox</span><span>© OpenStreetMap</span><b>Improve this map</b></Attribution>
          </MapView>
          <SearchCard>
            <FieldLabel>Oblasť</FieldLabel>
            <Select>Všetko<MdArrowDropDown size={22} /></Select>
            <FocusLine />
            <RangeLabel>Vzdialenosť</RangeLabel>
            <RangeRow><Track><Thumb /></Track><RangeValue>100m</RangeValue></RangeRow>
            <SearchButton>HĽADAJ VO VZDIALENOSTI</SearchButton>
          </SearchCard>
        </MapCard>
      </Content>
      <TaskbarEdge />
    </Screen>
  );
}
